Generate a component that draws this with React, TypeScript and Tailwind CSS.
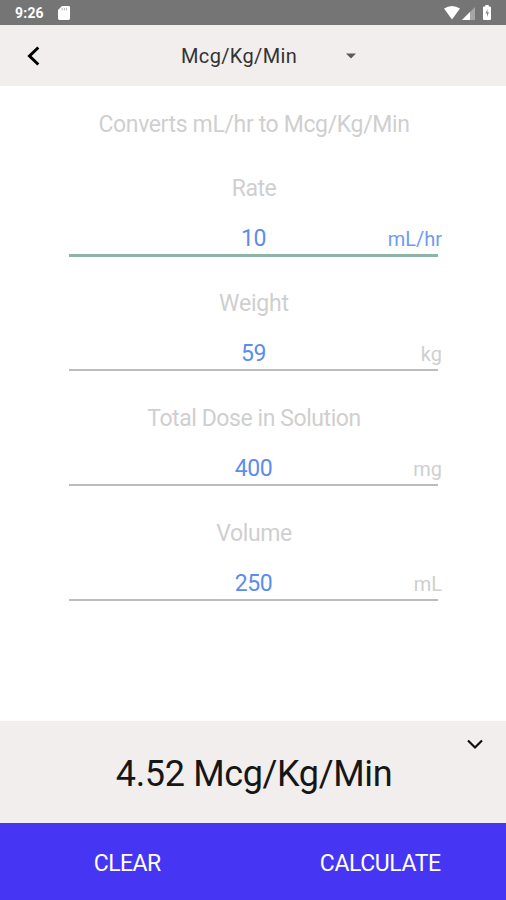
import React, { useState } from 'react';

interface Field {
  name: string;
  label: string;
  unit: string;
  labelSpacing: string;
}

const fields: Field[] = [
  { name: 'rate', label: 'Rate', unit: 'mL/hr', labelSpacing: 'tracking-[-0.5px]' },
  { name: 'weight', label: 'Weight', unit: 'kg', labelSpacing: 'tracking-[-0.2px]' },
  { name: 'dose', label: 'Total Dose in Solution', unit: 'mg', labelSpacing: 'tracking-[-0.43px]' },
  { name: 'volume', label: 'Volume', unit: 'mL', labelSpacing: 'tracking-[-0.4px]' },
];

const initialValues: Record<string, string> = {
  rate: '10',
  weight: '59',
  dose: '400',
  volume: '250',
};

const calculate = (v: Record<string, string>): string => {
  const result = (Number(v.rate) * Number(v.dose) * 1000) / (Number(v.volume) * Number(v.weight) * 60);
  return Number.isFinite(result) ? result.toFixed(2) : '0';
};

const StatusBar: React.FC = () => (
  <div className="flex h-[25px] items-center bg-[#757575] pl-[15px] pr-[15px] text-white">
    <span className="pt-[2px] text-[14px] font-bold leading-[23px] tracking-[0.2px]">9:26</span>
    <svg className="ml-[14px]" width="12" height="14" viewBox="0 0 12 14">
      <path d="M4 0h6.6Q12 0 12 1.4v11.2q0 1.4-1.4 1.4H1.4Q0 14 0 12.6V4z" fill="currentColor" />
      <path d="M4.2 1.8v2.6M6.4 1.8v2.6M8.6 1.8v2.6" stroke="#b5b5b5" strokeWidth="1" />
    </svg>
    <svg className="ml-auto" width="16" height="14" viewBox="0 0 16 14">
      <path d="M0 2.6Q8-2.4 16 2.6L8 13.6z" fill="currentColor" />
    </svg>
    <svg className="ml-[2px]" width="13" height="14" viewBox="0 0 13 14">
      <path d="M0 14L13 1v13z" fill="#a6a6a6" />
      <path d="M0 14L8 6v8z" fill="currentColor" />
    </svg>
    <svg className="ml-[8px]" width="8" height="15" viewBox="0 0 8 15">
      <path d="M2.3 0h3.4v1.5H7q1 0 1 1V14q0 1-1 1H1q-1 0-1-1V2.5q0-1 1-1h1.3z" fill="currentColor" />
      <path d="M4.5 4L2.5 8.5H4V12l2-4.7H4.5z" fill="#8a8a8a" />
    </svg>
  </div>
);

const App: React.FC = () => {
  const [values, setValues] = useState(initialValues);
  const [active, setActive] = useState('rate');
  const [result, setResult] = useState('4.52');

  const handleChange = (e: React.ChangeEvent<HTMLInputElement>) => {
    setValues({ ...values, [e.target.name]: e.target.value });
  };

  const handleClear = () => {
    setValues({ rate: '', weight: '', dose: '', volume: '' });
    setResult('0');
  };

  return (
    <div className="flex h-[900px] w-[506px] flex-col bg-white font-[Roboto,sans-serif]">
      <StatusBar />
      <header className="flex h-[61px] items-center bg-[#f1eeed] text-[#333]">
        <button type="button" aria-label="Back" className="ml-[26px]">
          <svg width="14" height="20" viewBox="0 0 14 20" fill="none" stroke="#000" strokeWidth="3">
            <path d="M12.3 1.5L3.5 10l8.800 8.5" />
          </svg>
        </button>
        <button type="button" className="ml-[141px] flex items-center">
          <span className="w-[117px] whitespace-nowrap text-left text-[20px] leading-[24px] tracking-[0.35px]">
            Mcg/Kg/Min
          </span>
          <svg className="ml-[48px]" width="10" height="6" viewBox="0 0 10 6">
            <path d="M0 0.5h10L5 5.5z" fill="#5a5a5a" />
          </svg>
        </button>
      </header>

      <main className="flex flex-1 flex-col pt-[25px]">
        <p className="pl-[2px] text-center text-[23px] leading-[28px] tracking-[-0.36px] text-[#cfcfcf]">
          Converts mL/hr to Mcg/Kg/Min
        </p>
        <div className="mt-9 flex flex-col">
          {fields.map((field) => (
            <div key={field.name} className="ml-[69px] h-[115px] w-[373px]">
              <label
                htmlFor={field.name}
                className={`block w-[370px] text-center text-[23px] leading-[28px] text-[#cfcfcf] ${field.labelSpacing}`}
              >
                {field.label}
              </label>
              <div className="mt-[21px] grid h-[30px] items-center">
                <input
                  id={field.name}
                  name={field.name}
                  value={values[field.name]}
                  onChange={handleChange}
                  onFocus={() => setActive(field.name)}
                  className="col-start-1 row-start-1 h-[28px] w-[369px] bg-transparent text-center text-[23px] leading-[28px] tracking-[-0.4px] text-[#5b8def] outline-none"
                />
                <span
                  className={`col-start-1 row-start-1 justify-self-end text-[20px] leading-[28px] ${
                    active === field.name ? 'text-[#6f9bf1]' : 'text-[#cfcfcf]'
                  }`}
                >
                  {field.unit}
                </span>
              </div>
              <div
                className={`w-[369px] ${active === field.name ? 'h-[3px] bg-[#8db5a3]' : 'h-[2px] bg-[#bdbdbd]'}`}
              />
            </div>
          ))}
        </div>
      </main>

      <section className="relative flex h-[102px] items-center justify-center bg-[#f1eeed] pl-[2px] pt-[3px]">
        <p className="text-[36px] leading-[44px] tracking-[-0.35px] text-[#161616]">{result} Mcg/Kg/Min</p>
        <button type="button" aria-label="Collapse" className="absolute right-[23px] top-[18px]">
          <svg width="16" height="11" viewBox="0 0 16 11" fill="none" stroke="#111" strokeWidth="2.2">
            <path d="M1 1.5L8 8.5l7-7" />
          </svg>
        </button>
      </section>

      <footer className="grid h-[77px] grid-cols-2 bg-[#4636f4] pl-px pt-[5px] text-[23px] text-white">
        <button type="button" className="tracking-[-0.5px]" onClick={handleClear}>
          CLEAR
        </button>
        <button type="button" className="pl-px tracking-[-0.4px]" onClick={() => setResult(calculate(values))}>
          CALCULATE
        </button>
      </footer>
    </div>
  );
};

export default App;
